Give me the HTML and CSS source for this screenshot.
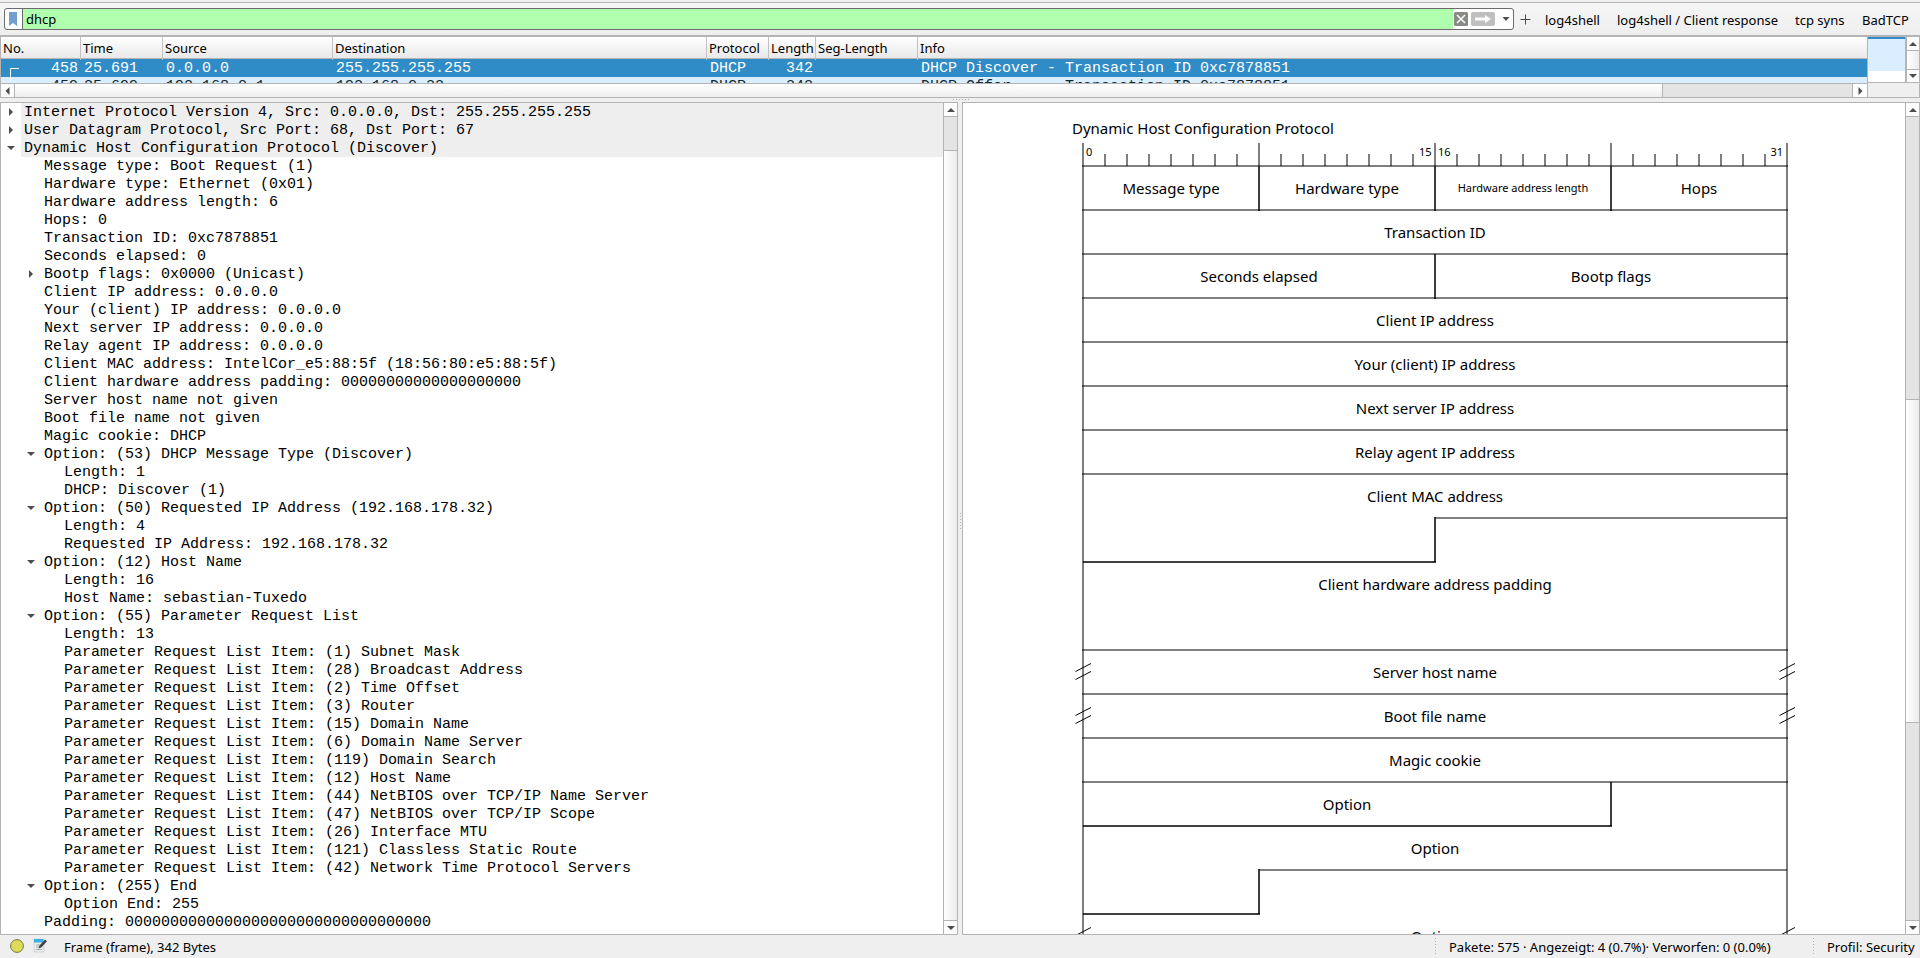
FILE: index.html
```html
<!DOCTYPE html>
<html lang="de">
<head>
<meta charset="utf-8">
<title>dhcp</title>
<link rel="stylesheet" href="styles.css">
</head>
<body>
<div class="app">
  <header class="toolbar">
    <div class="filter">
      <span class="bookmark"><svg width="8" height="14" viewBox="0 0 8 14"><path d="M0 0h8v14l-4-3-4 3z" fill="#729fcf"/></svg></span>
      <span class="query">dhcp</span>
      <span class="actions">
        <svg width="60" height="20" viewBox="0 0 60 20">
          <rect x="1" y="3" width="14" height="14" rx="1.5" fill="#888a85"/>
          <path d="M4 6l8 8M12 6l-8 8" stroke="#fff" stroke-width="1.5"/>
          <rect x="18" y="3" width="24" height="14" rx="2" fill="#bfbfbf"/>
          <path d="M22 8.500h10v-2.500l6 4-6 4v-2.500h-10z" fill="#fff"/>
          <path d="M49.500 8h7l-3.500 4z" fill="#4d4d4d"/>
        </svg>
      </span>
    </div>
    <svg class="plus" width="11" height="11"><path d="M5.500 .5v10M.5 5.500h10" stroke="#4a4a4a"/></svg>
    <span class="preset p1">log4shell</span>
    <span class="preset p2">log4shell / Client response</span>
    <span class="preset p3">tcp syns</span>
    <span class="preset p4">BadTCP</span>
  </header>

  <section class="packets">
    <div class="table">
      <div class="grid head">
        <span>No.</span><span>Time</span><span>Source</span><span>Destination</span><span>Protocol</span><span>Length</span><span>Seg-Length</span><span>Info</span>
      </div>
      <div class="rows">
        <div class="grid row selected">
          <span class="num">458<svg class="link" width="10" height="14"><path d="M.5 14V1.500h8.500" fill="none" stroke="#fff"/></svg></span><span>25.691</span><span>0.0.0.0</span><span>255.255.255.255</span><span>DHCP</span><span class="num">342</span><span></span><span>DHCP Discover - Transaction ID 0xc7878851</span>
        </div>
        <div class="grid row">
          <span class="num">459</span><span>25.699</span><span>192.168.0.1</span><span>192.168.0.32</span><span>DHCP</span><span class="num">342</span><span></span><span>DHCP Offer&nbsp;&nbsp;&nbsp; - Transaction ID 0xc7878851</span>
        </div>
      </div>
      <div class="hscroll">
        <span class="hbtn"><svg width="5" height="8"><path d="M4.500 0v8L.5 4z" fill="#4d4d4d"/></svg></span>
        <span class="hthumb"></span>
        <span class="htrack"></span>
        <span class="hbtn end"><svg width="5" height="8"><path d="M.5 0v8L4.500 4z" fill="#4d4d4d"/></svg></span>
      </div>
    </div>
    <div class="minimap"><i></i></div>
    <div class="vscroll top">
      <span class="vbtn"><svg width="8" height="4"><path d="M0 4h8L4 0z" fill="#4d4d4d"/></svg></span>
      <span class="vthumb"></span>
      <span class="vbtn down"><svg width="8" height="4"><path d="M0 0h8L4 4z" fill="#4d4d4d"/></svg></span>
    </div>
    <div class="corner"></div>
  </section>

  <div class="splitter-h"><i></i></div>

  <main class="panes">
    <section class="tree-pane">
      <ul class="tree" id="tree"></ul>
      <div class="vscroll">
        <span class="vbtn"><svg width="8" height="4"><path d="M0 4h8L4 0z" fill="#4d4d4d"/></svg></span>
        <span class="vtrack t1"></span>
        <span class="vthumb"></span>
        <span class="vbtn down"><svg width="8" height="4"><path d="M0 0h8L4 4z" fill="#4d4d4d"/></svg></span>
      </div>
    </section>
    <div class="splitter-v"><i></i></div>
    <section class="diagram-pane">
      <div class="canvas"><svg id="diagram" class="diagram" width="942" height="831" viewBox="963 103 942 831"></svg></div>
      <div class="vscroll">
        <span class="vbtn"><svg width="8" height="4"><path d="M0 4h8L4 0z" fill="#4d4d4d"/></svg></span>
        <span class="vtrack t2"></span>
        <span class="vthumb fixed"></span>
        <span class="vtrack rest"></span>
        <span class="vbtn down"><svg width="8" height="4"><path d="M0 0h8L4 4z" fill="#4d4d4d"/></svg></span>
      </div>
    </section>
  </main>

  <footer class="status">
    <svg class="expert" width="14" height="14"><circle cx="7" cy="7" r="6.400" fill="#dcdc5a" stroke="#77773a"/></svg>
    <svg class="note" width="15" height="15" viewBox="0 0 15 15">
      <path d="M1 1h10v13H1z" fill="#e8ecec" stroke="#c4c8c8" stroke-width=".6"/>
      <path d="M1 1h9.500v3.500H1z" fill="#3daee9"/>
      <path d="M3 7h4M3 9h3M3 11.500h6" stroke="#a5adad"/>
      <path d="M5.500 10.500l1-3L12 1.500l2 1.800-5.700 6.200z" fill="#444"/>
    </svg>
    <span class="field">Frame (frame), 342 Bytes</span>
    <i class="grip g1"></i>
    <span class="counts">Pakete: 575 · Angezeigt: 4 (0.7%)· Verworfen: 0 (0.0%)</span>
    <i class="grip g2"></i>
    <span class="profile">Profil: Security</span>
  </footer>
</div>
<script src="app.js"></script>
</body>
</html>
```
FILE: styles.css
```css
* { box-sizing: border-box; }
body { margin: 0; background: #efefef; color: #000; font-family: "Noto Sans", sans-serif; font-size: 13px; overflow: hidden; }
svg { display: block; flex: none; }
.app { display: flex; flex-direction: column; width: 1920px; height: 958px; }

.toolbar { display: flex; align-items: center; height: 37px; flex: none; padding: 3px 0 1px 4px; background: linear-gradient(#f6f6f6, #eee); border-top: 1px solid #efefef; border-bottom: 2px solid #b4b4b4; box-shadow: inset 0 1px 0 #efefef, inset 0 2px 0 #b4b4b4; white-space: nowrap; }
.filter { display: flex; width: 1510px; height: 22px; border: 1px solid #6b6b6b; border-radius: 3px; background: #fff; overflow: hidden; }
.bookmark { display: flex; width: 18px; padding: 3px 0 0 4px; border-right: 1px solid #6b6b6b; }
.query { flex: 1; background: #afffaf; padding-left: 3px; line-height: 20px; }
.actions { width: 60px; }
.plus { margin: 0 0 0 6px; }
.preset { line-height: 20px; padding-top: 2px; }
.p1 { width: 72px; margin-left: 14px; }
.p2 { width: 178px; }
.p3 { width: 67px; }

.packets { display: grid; grid-template-columns: 1868px 38px 14px; grid-template-rows: 46px 15px; height: 61px; flex: none; border-bottom: 1px solid #b4b4b4; }
.table { grid-row: 1 / 3; border-left: 1px solid #b4b4b4; border-right: 1px solid #b4b4b4; overflow: hidden; }
.grid { display: grid; grid-template-columns: 80px 82px 170px 374px 62px 47px 102px 1fr; white-space: nowrap; }
.head { height: 22px; background: linear-gradient(#fff, #e9e9e9); border-bottom: 1px solid #b4b4b4; line-height: 23px; }
.head span { padding-left: 2px; border-right: 1px solid #c2c2c2; }
.head span:last-child { border: 0; }
.rows { height: 24px; overflow: hidden; }
.row { height: 18px; line-height: 19px; font-family: "Liberation Mono", monospace; font-size: 15px; background: #daeeff; color: #12272e; }
.row.selected { background: #308cc6; color: #fff; }
.row > span { position: relative; padding-left: 3px; }
.row > .num { text-align: right; padding-right: 3px; }
.link { position: absolute; left: 9px; top: 8px; }
.hscroll { display: flex; height: 14px; border-top: 1px solid #b4b4b4; }
.hbtn { display: flex; align-items: center; justify-content: center; width: 14px; background: #fdfdfd; border-right: 1px solid #b4b4b4; }
.hbtn.end { border: 0; }
.hthumb { width: 1647px; background: linear-gradient(#fff, #eee); }
.htrack { flex: 1; background: #e4e4e4; border-left: 1px solid #b4b4b4; border-right: 1px solid #b4b4b4; }
.minimap { border-right: 1px solid #b4b4b4; border-bottom: 1px solid #b4b4b4; background: #fff; }
.minimap i { display: block; height: 34px; background: #daeeff; border-top: 2px solid #308cc6; }
.corner { grid-column: 2 / 4; border-top: 1px solid #efefef; border-right: 1px solid #b4b4b4; }

.vscroll { display: flex; flex-direction: column; width: 15px; flex: none; border-left: 1px solid #b4b4b4; border-right: 1px solid #b4b4b4; background: #fff; }
.vscroll.top { width: 14px; border-bottom: 1px solid #b4b4b4; }
.vbtn { display: flex; height: 14px; flex: none; align-items: center; justify-content: center; border-bottom: 1px solid #b4b4b4; background: #fdfdfd; }
.vbtn.down { border-bottom: 0; border-top: 1px solid #b4b4b4; }
.top .vbtn.down { height: 13px; }
.vthumb { flex: 1; background: linear-gradient(90deg, #fff, #ececec); }
.vthumb.fixed { flex: none; height: 323px; border-bottom: 1px solid #b4b4b4; }
.vtrack { background: #e4e4e4; border-bottom: 1px solid #b4b4b4; }
.vtrack.t1 { height: 34px; }
.vtrack.t2 { height: 283px; }
.vtrack.rest { flex: 1; border: 0; }

.splitter-h { display: flex; height: 4px; flex: none; justify-content: center; align-items: flex-start; }
.splitter-h i { width: 16px; height: 1px; margin: 1px 0 0 2px; background: repeating-linear-gradient(90deg, #b0b0b0 0 1px, transparent 1px 3px); }
.panes { display: flex; height: 833px; flex: none; }
.tree-pane { display: flex; width: 958px; border: solid #b4b4b4; border-width: 1px 0 1px 1px; background: #fff; }
.tree { flex: 1; margin: 0; padding: 0; list-style: none; overflow: hidden; font-family: "Liberation Mono", monospace; font-size: 15px; line-height: 19px; }
.tree li { display: flex; height: 18px; white-space: pre; }
.tree .arrow { width: 20px; display: flex; align-items: center; justify-content: center; }
.tree .label { flex: 1; padding-left: 3px; }
.tree .top .label { background: #eee; }
.tree .sub { padding-left: 20px; }
.tree .leaf { padding-left: 40px; }
.splitter-v { display: flex; width: 4px; padding: 4px 0 0 1px; align-items: center; justify-content: center; }
.splitter-v i { width: 1px; height: 16px; background: repeating-linear-gradient(#b0b0b0 0 1px, transparent 1px 3px); }
.diagram-pane { display: flex; flex: 1; border: solid #b4b4b4; border-width: 1px 0 1px 1px; background: #fff; }
.canvas { flex: 1; overflow: hidden; }
.diagram .thin { stroke: #000; stroke-opacity: .5; stroke-width: 2; fill: none; }
.diagram .slash { stroke: #000; stroke-width: 1; fill: none; }
.diagram text { font-size: 15px; text-anchor: middle; }
.diagram text.small { font-size: 11px; }
.diagram text.tiny { font-size: 11px; }
.diagram text.start { text-anchor: start; }
.diagram text.end { text-anchor: end; }

.status { display: flex; height: 23px; flex: none; align-items: center; white-space: nowrap; }
.expert { margin: 0 9px 2px 10px; }
.note { margin: 0 16px 3px 0; }
.field { width: 1371px; }
.grip { width: 1px; height: 17px; background: repeating-linear-gradient(#b0b0b0 0 1px, transparent 1px 3px); }
.counts { width: 364px; margin-left: 13px; }
.profile { margin-left: 13px; }
```
FILE: app.js
```js
// Tree rows: [depth, state, text]; state is '>' collapsed, 'v' expanded, '' leaf.
var rows = [
  [0, '>', 'Internet Protocol Version 4, Src: 0.0.0.0, Dst: 255.255.255.255'],
  [0, '>', 'User Datagram Protocol, Src Port: 68, Dst Port: 67'],
  [0, 'v', 'Dynamic Host Configuration Protocol (Discover)'],
  [1, '', 'Message type: Boot Request (1)'],
  [1, '', 'Hardware type: Ethernet (0x01)'],
  [1, '', 'Hardware address length: 6'],
  [1, '', 'Hops: 0'],
  [1, '', 'Transaction ID: 0xc7878851'],
  [1, '', 'Seconds elapsed: 0'],
  [1, '>', 'Bootp flags: 0x0000 (Unicast)'],
  [1, '', 'Client IP address: 0.0.0.0'],
  [1, '', 'Your (client) IP address: 0.0.0.0'],
  [1, '', 'Next server IP address: 0.0.0.0'],
  [1, '', 'Relay agent IP address: 0.0.0.0'],
  [1, '', 'Client MAC address: IntelCor_e5:88:5f (18:56:80:e5:88:5f)'],
  [1, '', 'Client hardware address padding: 00000000000000000000'],
  [1, '', 'Server host name not given'],
  [1, '', 'Boot file name not given'],
  [1, '', 'Magic cookie: DHCP'],
  [1, 'v', 'Option: (53) DHCP Message Type (Discover)'],
  [2, '', 'Length: 1'],
  [2, '', 'DHCP: Discover (1)'],
  [1, 'v', 'Option: (50) Requested IP Address (192.168.178.32)'],
  [2, '', 'Length: 4'],
  [2, '', 'Requested IP Address: 192.168.178.32'],
  [1, 'v', 'Option: (12) Host Name'],
  [2, '', 'Length: 16'],
  [2, '', 'Host Name: sebastian-Tuxedo'],
  [1, 'v', 'Option: (55) Parameter Request List'],
  [2, '', 'Length: 13'],
  [2, '', 'Parameter Request List Item: (1) Subnet Mask'],
  [2, '', 'Parameter Request List Item: (28) Broadcast Address'],
  [2, '', 'Parameter Request List Item: (2) Time Offset'],
  [2, '', 'Parameter Request List Item: (3) Router'],
  [2, '', 'Parameter Request List Item: (15) Domain Name'],
  [2, '', 'Parameter Request List Item: (6) Domain Name Server'],
  [2, '', 'Parameter Request List Item: (119) Domain Search'],
  [2, '', 'Parameter Request List Item: (12) Host Name'],
  [2, '', 'Parameter Request List Item: (44) NetBIOS over TCP/IP Name Server'],
  [2, '', 'Parameter Request List Item: (47) NetBIOS over TCP/IP Scope'],
  [2, '', 'Parameter Request List Item: (26) Interface MTU'],
  [2, '', 'Parameter Request List Item: (121) Classless Static Route'],
  [2, '', 'Parameter Request List Item: (42) Network Time Protocol Servers'],
  [1, 'v', 'Option: (255) End'],
  [2, '', 'Option End: 255'],
  [1, '', 'Padding: 0000000000000000000000000000000000']
];
var arrows = {
  '>': '<svg width="8" height="8"><path d="M2 0l4 4-4 4z" fill="#4d4d4d"/></svg>',
  'v': '<svg width="8" height="8"><path d="M0 2h8l-4 4z" fill="#4d4d4d"/></svg>',
  '': ''
};
var depthClass = ['top', 'sub', 'leaf'];
document.getElementById('tree').innerHTML = rows.map(function (r) {
  return '<li class="' + depthClass[r[0]] + '"><span class="arrow">' + arrows[r[1]] +
    '</span><span class="label">' + r[2] + '</span></li>';
}).join('');

// Header diagram: 32 bits across, 22px per bit, 44px per row.
var L = 1083, B = 22, R = L + 32 * B, T = 166, H = 44, out = '';
function line(x1, y1, x2, y2) { out += '<path class="thin" d="M' + x1 + ' ' + y1 + 'L' + x2 + ' ' + y2 + '"/>'; }
function label(x, y, s, c) { out += '<text x="' + x + '" y="' + y + '" class="' + (c || '') + '">' + s + '</text>'; }
function slashes(x, y) {
  out += '<path class="slash" d="M' + (x - 7.5) + ' ' + (y + 4) + 'l15.500 -8m-15.500 16l15.500 -8"/>';
}
for (var i = 0; i <= 32; i++) {
  line(L + i * B, i % 8 ? 154 : 143, L + i * B, T);
}
line(L, T, L, 940);
line(R, T, R, 940);
[0, 1, 2, 3, 4, 5, 6, 7, 11, 12, 13, 14].forEach(function (n) { line(L - 1, T + n * H, R + 1, T + n * H); });
function dark(x1, y1, x2, y2) { line(x1, y1, x2, y2); line(x1, y1, x2, y2); }
[8, 16, 24].forEach(function (b) { dark(L + b * B, T, L + b * B, T + H + 1); });
dark(L + 16 * B, T + 2 * H, L + 16 * B, T + 3 * H + 1);
line(L + 16 * B, T + 8 * H, R, T + 8 * H);
dark(L + 16 * B, T + 8 * H - 1, L + 16 * B, T + 9 * H);
dark(L, T + 9 * H, L + 16 * B + 1, T + 9 * H);
dark(L + 24 * B, T + 14 * H, L + 24 * B, T + 15 * H);
dark(L, T + 15 * H, L + 24 * B + 1, T + 15 * H);
line(L + 8 * B, T + 16 * H, R, T + 16 * H);
dark(L + 8 * B, T + 16 * H - 1, L + 8 * B, T + 17 * H);
dark(L, T + 17 * H, L + 8 * B + 1, T + 17 * H);
label(1072, 134, 'Dynamic Host Configuration Protocol', 'start');
label(1086, 156, '0', 'tiny start');
label(1431.5, 156, '15', 'tiny end');
label(1438, 156, '16', 'tiny start');
label(1783, 156, '31', 'tiny end');
label(1171, 194, 'Message type');
label(1347, 194, 'Hardware type');
label(1523, 192, 'Hardware address length', 'small');
label(1699, 194, 'Hops');
label(1435, 238, 'Transaction ID');
label(1259, 282, 'Seconds elapsed');
label(1611, 282, 'Bootp flags');
['Client IP address', 'Your (client) IP address', 'Next server IP address', 'Relay agent IP address', 'Client MAC address']
  .forEach(function (s, n) { label(1435, 326 + n * H, s); });
label(1435, 590, 'Client hardware address padding');
['Server host name', 'Boot file name', 'Magic cookie'].forEach(function (s, n) { label(1435, 678 + n * H, s); });
label(1347, 810, 'Option');
label(1435, 854, 'Option');
label(1435, 942, 'Option');
[667.5, 711.5, 931.5].forEach(function (y) { slashes(L, y); slashes(R, y); });
document.getElementById('diagram').innerHTML = out;
```
